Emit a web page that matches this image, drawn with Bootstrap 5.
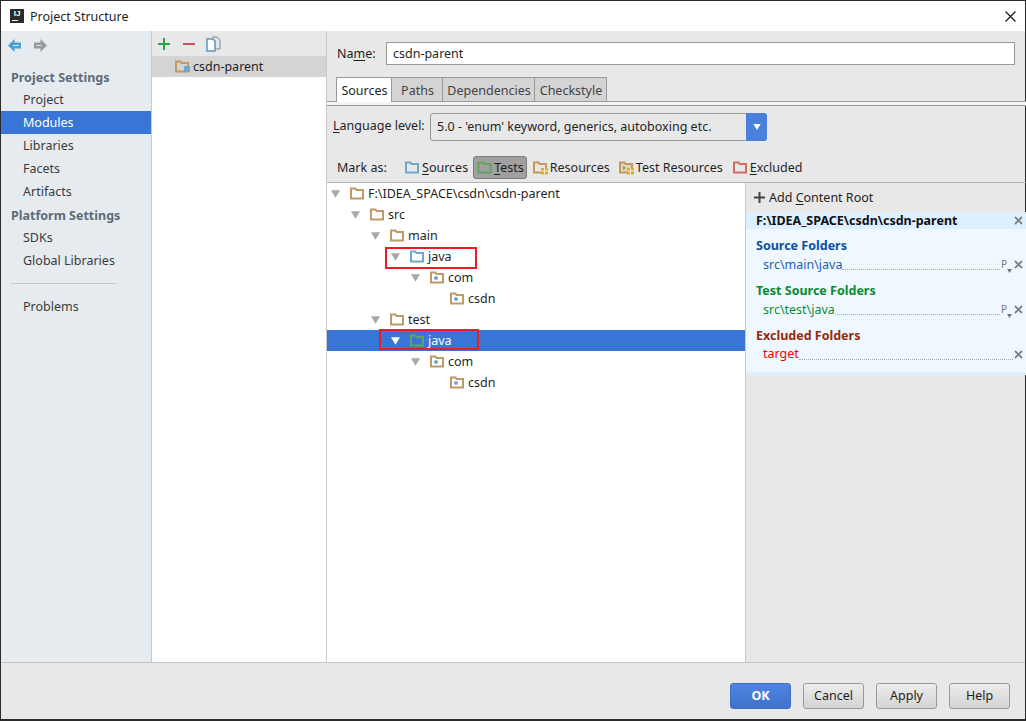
<!DOCTYPE html>
<html lang="en">
<head>
    <meta charset="UTF-8">
    <meta name="viewport" content="width=device-width, initial-scale=1.0">
    <title>Project Structure</title>
    <link href="https://cdn.jsdelivr.net/npm/bootstrap@5.3.0/dist/css/bootstrap.min.css" rel="stylesheet">
    <style>
        html, body { height: 100%; }
        body { font-family: "Noto Sans", "Liberation Sans", sans-serif; font-size: 12.5px; line-height: 18px; color: #1f1f1f; background: #e8e8e8; overflow: hidden; }
        u { text-underline-offset: 2px; }
        .win { width: 1026px; height: 721px; border: 1px solid #2b2b2b; border-bottom-width: 2px; }
        .title-bar { height: 30px; background: #fff; padding-left: 9px; gap: 6px; }
        .ij-logo { width: 14px; height: 14px; background: #2b2b2b; color: #fff; font: bold 8px/10px "Liberation Sans", sans-serif; text-align: center; position: relative; }
        .ij-logo::after { content: ""; position: absolute; left: 2px; bottom: 2px; width: 6px; height: 1px; background: #fff; }
        .close-x { margin-left: auto; margin-right: 9px; }
        .main-area { height: 631px; }
        /* labels sit 1px low in their rows */
        .title-bar span, .grp-line span:first-child { margin-top: 2px; }

        .side { width: 150px; background: #e6ebf0; border-right: 1px solid #c9c9c9; box-sizing: content-box; }
        .side-nav { height: 31px; padding: 5px 7px 8px; gap: 13px; }
        .side-head { font-weight: 700; color: #5d6b78; padding-left: 10px; height: 23px; line-height: 25px; }
        .side-head.first { margin-top: 3px; }
        .side-item { padding-left: 22px; height: 23px; line-height: 23px; color: #3c3c3c; }
        .side-item.active { background: #3875d7; color: #fff; }
        .side-sep { border-top: 1px solid #c4c8cc; margin: 11px 35px 11px 10px; }

        .mods { width: 175px; background: #fff; border-right: 1px solid #c9c9c9; }
        .mods-bar { height: 25px; background: #e8e8e8; padding: 3px 6px; gap: 13px; }
        .copy-ico { margin-left: -2px; }
        .mod-row { height: 21px; background: #d4d4d4; padding-left: 23px; gap: 3px; }

        .detail { width: 699px; }
        .name-row { height: 46px; padding: 11px 11px 0 10px; }
        .name-label { margin-top: 3px; }
        .name-input { width: 629px; height: 23px; margin-left: auto; background: #fff; border: 1px solid #999; padding-left: 6px; line-height: 21px; }
        .tabs-row { height: 24px; padding-left: 9px; border-bottom: 1px solid #999; box-sizing: content-box; }
        .ide-tab { height: 24px; line-height: 25px; text-align: center; padding-left: 1px; background: #d4d4d4; border: 1px solid #999; border-left: 0; border-bottom: 0; color: #444; }
        .ide-tab.on { background: #fff; color: #1f1f1f; border-left: 1px solid #999; height: 25px; position: relative; }
        .tab-src { width: 56px; } .tab-paths { width: 51px; } .tab-dep { width: 92px; } .tab-chk { width: 72px; }
        .tabs-gap { height: 3px; background: #f4f4f4; border-bottom: 1px solid #999; box-sizing: content-box; }
        .lang-row { height: 50px; padding: 7px 0 0 6px; }
        .lang-label { width: 97px; margin-top: 4px; flex: none; }
        .lang-box { width: 337px; height: 28px; border: 1px solid #999; border-radius: 3px; padding-left: 6px; background: #e8e8e8; }
        .lang-arrow { width: 21px; height: 28px; margin-left: auto; margin-right: -1px; margin-top: -1px; margin-bottom: -1px; background: #4a7fdc; border-radius: 0 3px 3px 0; }
        .mark-row { height: 26px; padding-left: 10px; border-bottom: 1px solid #b4b4b4; box-sizing: content-box; }
        .mark-label { width: 64px; line-height: 23px; }
        .mark-btn { height: 23px; padding: 0 3px; gap: 3px; margin-right: 1px; border: 1px solid transparent; }
        .mark-btn.on { background: #a0a0a0; border: 1px solid #7c7c7c; border-radius: 3px; gap: 2px; padding-right: 2px; margin-right: 2px; }
        .mark-btn.tight { gap: 2px; }
        .mark-btn.wide { margin-right: 2px; }

        .tree { width: 418px; background: #fff; }
        .tree-row { height: 21px; position: relative; }
        .tree-row.picked { background: #3875d7; color: #fff; }
        .lvl-0 { padding-left: 2px; } .lvl-1 { padding-left: 22px; } .lvl-2 { padding-left: 42px; }
        .lvl-3 { padding-left: 62px; } .lvl-4 { padding-left: 82px; } .lvl-5 { padding-left: 102px; }
        .twist { width: 21px; flex: none; }
        .twist-ico { color: #a8a8a8; margin-left: 2px; margin-right: 10px; flex: none; }
        .picked .twist-ico { color: #fff; }
        .ico-gap { margin-right: 4px; flex: none; }
        .red-box { position: absolute; border: 2px solid #ed1c24; }
        .red-a { left: 58px; width: 92px; top: 1px; height: 22px; }
        .red-b { left: 52px; width: 100px; top: -1px; height: 21px; }

        .roots { width: 281px; border-left: 1px solid #c9c9c9; }
        .add-root { height: 29px; padding-left: 8px; gap: 4px; }
        .root-head { height: 17px; background: #ddf0ff; padding: 0 3px 0 10px; font-weight: 700; color: #111; }
        .root-body { background: #eff8ff; height: 136px; padding: 7px 3px 0 10px; border-bottom: 3px solid #ddf0ff; box-sizing: content-box; }
        .grp-title { font-weight: 700; height: 19px; line-height: 20px; }
        .grp-line { height: 18px; padding-left: 7px; margin-bottom: 8px; }
        .grp-line.last-line span:first-child { margin-top: 0; }
        .dots { flex: 1; border-bottom: 1px dotted #aaa; height: 12px; margin-right: 1px; }
        .c-src { color: #0b4ea2; } .c-src-l { color: #1f5fb0; }
        .c-tst { color: #0a8a2e; } .c-tst-l { color: #128a38; }
        .c-exc { color: #962a0a; } .c-exc-l { color: #f00000; }
        .ctl-p { font-size: 10px; color: #777; width: 13px; flex: none; gap: 0; }

        .foot { height: 57px; border-top: 1px solid #c4c4c4; padding: 20px 15px 0 0; gap: 12px; }
        .foot-btn { width: 61px; height: 26px; font-size: 12.5px; line-height: 24px; padding: 0; border: 1px solid #999; border-radius: 3px; background: linear-gradient(#ececec, #d4d4d4); color: #1f1f1f; }
        .foot-btn.go { background: linear-gradient(#4e84e0, #3f74cc); border-color: #3f70c8; color: #fff; font-weight: 700; }
    </style>
</head>
<body>
    <!-- icons -->
    <svg width="0" height="0" class="position-absolute">
        <symbol id="folder" viewBox="0 0 14 13"><path d="M1 3V1.500h4.500L6.500 3H13v8.500H1z" fill="none" stroke="currentColor" stroke-width="2"/></symbol>
        <symbol id="pkg" viewBox="0 0 14 13"><path d="M1 3V1.500h4.500L6.500 3H13v8.500H1z" fill="#fff" stroke="#bd9a66" stroke-width="2"/><circle cx="6" cy="7" r="2" fill="#6fa8cf"/></symbol>
        <symbol id="res" viewBox="0 0 15 14"><path d="M1 3V1.500h4.500L6.500 3H13v8.500H1z" fill="none" stroke="#c09a60" stroke-width="2"/><path d="M8 7h7v6.500H8z" fill="#e2a92e"/><path d="M8 10h7M11.500 7v6.500" stroke="#fff" stroke-width=".8"/></symbol>
        <symbol id="testres" viewBox="0 0 15 14"><path d="M1 3V1.500h4.500L6.500 3H13v8.500H1z" fill="#e8d5b5" stroke="#c09a60" stroke-width="2"/><path d="M4 5l3 2-3 2z" fill="#5aa65a"/><path d="M8 7h7v6.500H8z" fill="#e2a92e"/><path d="M8 10h7M11.500 7v6.500" stroke="#fff" stroke-width=".8"/></symbol>
        <symbol id="down" viewBox="0 0 11 9"><path d="M0 0h11L5.500 9z" fill="currentColor"/></symbol>
        <symbol id="xx" viewBox="0 0 9 9"><path d="M1 1l7 7M8 1L1 8" stroke="#808080" stroke-width="1.800" fill="none"/></symbol>
    </svg>

    <div class="win d-flex flex-column">
        <div class="title-bar d-flex align-items-center">
            <div class="ij-logo">IJ</div>
            <span>Project Structure</span>
            <svg class="close-x" width="11" height="11" viewBox="0 0 11 11"><path d="M.5.500l10 10M10.500.500l-10 10" stroke="#111" stroke-width="1.100"/></svg>
        </div>

        <div class="main-area d-flex">
            <!-- left nav -->
            <div class="side flex-shrink-0">
                <div class="side-nav d-flex align-items-center">
                    <svg width="13" height="13" viewBox="0 0 13 13"><path d="M6.500 0L0 6.500 6.500 13V9.500H13v-6H6.500z" fill="#4d9fd0"/><path d="M5 6h6v1H5z" fill="#cfe6f4"/></svg>
                    <svg width="13" height="13" viewBox="0 0 13 13"><path d="M6.500 0L13 6.500 6.500 13V9.500H0v-6h6.500z" fill="#9a9a9a"/><path d="M2 6h6v1H2z" fill="#dcdcdc"/></svg>
                </div>
                <div class="side-head first">Project Settings</div>
                <div class="side-item">Project</div>
                <div class="side-item active">Modules</div>
                <div class="side-item">Libraries</div>
                <div class="side-item">Facets</div>
                <div class="side-item">Artifacts</div>
                <div class="side-head">Platform Settings</div>
                <div class="side-item">SDKs</div>
                <div class="side-item">Global Libraries</div>
                <div class="side-sep"></div>
                <div class="side-item">Problems</div>
            </div>

            <!-- module list -->
            <div class="mods flex-shrink-0">
                <div class="mods-bar d-flex align-items-center">
                    <svg width="12" height="12" viewBox="0 0 12 12"><path d="M6 0v12M0 6h12" stroke="#2aa549" stroke-width="2"/></svg>
                    <svg width="12" height="12" viewBox="0 0 12 12"><path d="M0 6h12" stroke="#c9554d" stroke-width="2"/></svg>
                    <svg class="copy-ico" width="15" height="16" viewBox="0 0 15 16"><path d="M6 1h5l3 3v9H9" fill="#dfe6ec" stroke="#8a8a8a"/><path d="M1 3h6l2 2v10H1z" fill="#fff" stroke="#5f93b8" stroke-width="1.500"/></svg>
                </div>
                <div class="mod-row d-flex align-items-center">
                    <svg width="15" height="13" viewBox="0 0 15 13"><path d="M1 3V1.500h4.500L6.500 3H13v8.500H1z" fill="none" stroke="#c09a60" stroke-width="2"/><path d="M9 6h6v6H9z" fill="#6fa8cf"/></svg>
                    <span>csdn-parent</span>
                </div>
            </div>

            <!-- module detail -->
            <div class="detail d-flex flex-column">
                <div class="name-row d-flex align-items-start">
                    <span class="name-label">Na<u>m</u>e:</span>
                    <div class="name-input">csdn-parent</div>
                </div>
                <div class="tabs-row d-flex">
                    <div class="ide-tab on tab-src">Sources</div>
                    <div class="ide-tab tab-paths">Paths</div>
                    <div class="ide-tab tab-dep">Dependencies</div>
                    <div class="ide-tab tab-chk">Checkstyle</div>
                </div>
                <div class="tabs-gap"></div>
                <div class="lang-row d-flex align-items-start">
                    <span class="lang-label"><u>L</u>anguage level:</span>
                    <div class="lang-box d-flex align-items-center">
                        <span>5.0 - 'enum' keyword, generics, autoboxing etc.</span>
                        <div class="lang-arrow d-flex align-items-center justify-content-center text-white"><svg width="8" height="6"><use href="#down"/></svg></div>
                    </div>
                </div>
                <div class="mark-row d-flex align-items-start">
                    <span class="mark-label">Mark as:</span>
                    <div class="mark-btn d-flex align-items-center"><svg width="14" height="13" style="color:#6fa8cf"><use href="#folder"/></svg><span><u>S</u>ources</span></div>
                    <div class="mark-btn on d-flex align-items-center"><svg width="15" height="13" style="color:#62a362"><use href="#folder"/></svg><span><u>T</u>ests</span></div>
                    <div class="mark-btn tight d-flex align-items-center"><svg width="15" height="14"><use href="#res"/></svg><span>Resources</span></div>
                    <div class="mark-btn tight wide d-flex align-items-center"><svg width="15" height="14"><use href="#testres"/></svg><span>Test Resources</span></div>
                    <div class="mark-btn d-flex align-items-center"><svg width="14" height="13" style="color:#cf6f62"><use href="#folder"/></svg><span><u>E</u>xcluded</span></div>
                </div>
                <div class="d-flex flex-grow-1">
                    <div class="tree">
                        <div class="tree-row lvl-0 d-flex align-items-center"><svg class="twist-ico" width="9" height="8"><use href="#down"/></svg><svg class="ico-gap" width="14" height="13" style="color:#bd9a66"><use href="#folder"/></svg><span>F:\IDEA_SPACE\csdn\csdn-parent</span></div>
                        <div class="tree-row lvl-1 d-flex align-items-center"><svg class="twist-ico" width="9" height="8"><use href="#down"/></svg><svg class="ico-gap" width="14" height="13" style="color:#bd9a66"><use href="#folder"/></svg><span>src</span></div>
                        <div class="tree-row lvl-2 d-flex align-items-center"><svg class="twist-ico" width="9" height="8"><use href="#down"/></svg><svg class="ico-gap" width="14" height="13" style="color:#bd9a66"><use href="#folder"/></svg><span>main</span></div>
                        <div class="tree-row lvl-3 d-flex align-items-center"><svg class="twist-ico" width="9" height="8"><use href="#down"/></svg><svg class="ico-gap" width="14" height="13" style="color:#6fa8cf"><use href="#folder"/></svg><span>java</span><div class="red-box red-a"></div></div>
                        <div class="tree-row lvl-4 d-flex align-items-center"><svg class="twist-ico" width="9" height="8"><use href="#down"/></svg><svg class="ico-gap" width="14" height="13"><use href="#pkg"/></svg><span>com</span></div>
                        <div class="tree-row lvl-5 d-flex align-items-center"><i class="twist"></i><svg class="ico-gap" width="14" height="13"><use href="#pkg"/></svg><span>csdn</span></div>
                        <div class="tree-row lvl-2 d-flex align-items-center"><svg class="twist-ico" width="9" height="8"><use href="#down"/></svg><svg class="ico-gap" width="14" height="13" style="color:#bd9a66"><use href="#folder"/></svg><span>test</span></div>
                        <div class="tree-row picked lvl-3 d-flex align-items-center"><svg class="twist-ico" width="9" height="8"><use href="#down"/></svg><svg class="ico-gap" width="14" height="13" style="color:#62a362"><use href="#folder"/></svg><span>java</span><div class="red-box red-b"></div></div>
                        <div class="tree-row lvl-4 d-flex align-items-center"><svg class="twist-ico" width="9" height="8"><use href="#down"/></svg><svg class="ico-gap" width="14" height="13"><use href="#pkg"/></svg><span>com</span></div>
                        <div class="tree-row lvl-5 d-flex align-items-center"><i class="twist"></i><svg class="ico-gap" width="14" height="13"><use href="#pkg"/></svg><span>csdn</span></div>
                    </div>
                    <div class="roots">
                        <div class="add-root d-flex align-items-center">
                            <svg width="11" height="11" viewBox="0 0 11 11"><path d="M5.500 0v11M0 5.500h11" stroke="#444" stroke-width="2"/></svg>
                            <span>Add <u>C</u>ontent Root</span>
                        </div>
                        <div class="root-head d-flex align-items-center justify-content-between"><span>F:\IDEA_SPACE\csdn\csdn-parent</span><svg width="9" height="9"><use href="#xx"/></svg></div>
                        <div class="root-body">
                            <div class="grp-title c-src">Source Folders</div>
                            <div class="grp-line d-flex align-items-center c-src-l"><span>src\main\java</span><span class="dots"></span><span class="ctl-p d-flex align-items-end">P<svg width="5" height="4" class="text-secondary"><use href="#down"/></svg></span><svg width="9" height="9"><use href="#xx"/></svg></div>
                            <div class="grp-title c-tst">Test Source Folders</div>
                            <div class="grp-line d-flex align-items-center c-tst-l"><span>src\test\java</span><span class="dots"></span><span class="ctl-p d-flex align-items-end">P<svg width="5" height="4" class="text-secondary"><use href="#down"/></svg></span><svg width="9" height="9"><use href="#xx"/></svg></div>
                            <div class="grp-title c-exc">Excluded Folders</div>
                            <div class="grp-line last-line d-flex align-items-center c-exc-l"><span>target</span><span class="dots"></span><svg width="9" height="9"><use href="#xx"/></svg></div>
                        </div>
                    </div>
                </div>
            </div>
        </div>

        <div class="foot d-flex justify-content-end align-items-start">
            <button type="button" class="btn foot-btn go">OK</button>
            <button type="button" class="btn foot-btn">Cancel</button>
            <button type="button" class="btn foot-btn">Apply</button>
            <button type="button" class="btn foot-btn">Help</button>
        </div>
    </div>

    <script src="https://cdn.jsdelivr.net/npm/bootstrap@5.3.0/dist/js/bootstrap.bundle.min.js"></script>
</body>
</html>
